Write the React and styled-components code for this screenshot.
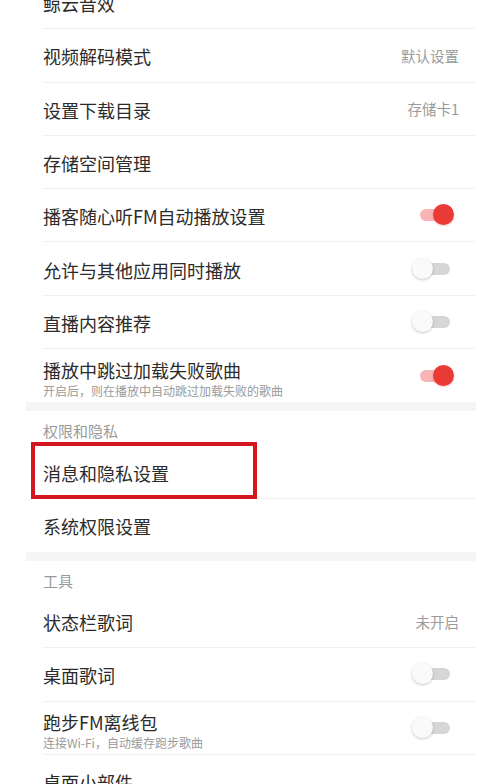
import styled, { createGlobalStyle } from "styled-components";

const GlobalStyle = createGlobalStyle`
  html, body {
    margin: 0;
    padding: 0;
    background: #ffffff;
    overflow: hidden;
  }
  body {
    font-family: "Noto Sans CJK SC", "Noto Sans", sans-serif;
  }
`;

const Page = styled.div`
  width: 493px;
  height: 784px;
  overflow: hidden;
  background: #ffffff;
`;

const List = styled.div`
  margin: -24px 17px 0 26px;
  display: flex;
  flex-direction: column;
`;

const Row = styled.div`
  position: relative;
  height: 53.3px;
  flex-shrink: 0;
  box-sizing: border-box;
  margin-left: 17px;
  padding-right: 17px;
  display: flex;
  align-items: center;
  justify-content: space-between;
  border-bottom: ${({ last }) => (last ? "none" : "1px solid #f1f1f1")};
`;

const TextStack = styled.div`
  display: flex;
  flex-direction: column;
  padding-top: ${({ sub }) => (sub ? "6px" : "2px")};
`;

const Title = styled.span`
  font-size: 18px;
  line-height: 22px;
  color: #2b2b2b;
`;

const Sub = styled.span`
  font-size: 12px;
  line-height: 16px;
  margin-top: 2px;
  color: #9a9a9a;
`;

const Value = styled.span`
  font-size: 14.5px;
  color: #9b9b9b;
`;

const Band = styled.div`
  height: 9px;
  flex-shrink: 0;
  background: #f5f5f5;
`;

const Header = styled.div`
  height: 34px;
  flex-shrink: 0;
  box-sizing: border-box;
  padding: 10px 0 0 17px;
  font-size: 15px;
  line-height: 20px;
  color: #9a9a9a;
`;

const Toggle = styled.div`
  position: relative;
  width: 30px;
  height: 22px;
  margin-right: 9px;
  flex-shrink: 0;
`;

const Track = styled.div`
  position: absolute;
  left: 0;
  right: 0;
  top: 5px;
  height: 12px;
  border-radius: 6px;
  background: ${({ on }) => (on ? "#f8b4b4" : "#d6d6d6")};
`;

const Knob = styled.div`
  position: absolute;
  top: 0;
  left: ${({ on }) => (on ? "13px" : "-8px")};
  width: 21px;
  height: 21px;
  border-radius: 50%;
  background: ${({ on }) => (on ? "#ea3a35" : "#fafafa")};
  box-shadow: ${({ on }) =>
    on ? "0 1px 2px rgba(200, 30, 30, 0.25)" : "0 1px 3px rgba(0, 0, 0, 0.22)"};
`;

const Highlight = styled.div`
  position: absolute;
  left: -12px;
  top: -3px;
  width: 226px;
  height: 57px;
  box-sizing: border-box;
  border: 4.5px solid #d3151f;
  pointer-events: none;
`;

const Switch = ({ on }) => (
  <Toggle>
    <Track on={on} />
    <Knob on={on} />
  </Toggle>
);

const Item = ({ title, sub, value, toggle, last, highlight }) => (
  <Row last={last}>
    <TextStack sub={!!sub}>
      <Title>{title}</Title>
      {sub && <Sub>{sub}</Sub>}
    </TextStack>
    {value && <Value>{value}</Value>}
    {toggle !== undefined && <Switch on={toggle} />}
    {highlight && <Highlight />}
  </Row>
);

export default function App() {
  return (
    <Page>
      <GlobalStyle />
      <List>
        <Item title="鲸云音效" />
        <Item title="视频解码模式" value="默认设置" />
        <Item title="设置下载目录" value="存储卡1" />
        <Item title="存储空间管理" />
        <Item title="播客随心听FM自动播放设置" toggle={true} />
        <Item title="允许与其他应用同时播放" toggle={false} />
        <Item title="直播内容推荐" toggle={false} />
        <Item
          title="播放中跳过加载失败歌曲"
          sub="开启后，则在播放中自动跳过加载失败的歌曲"
          toggle={true}
          last
        />
        <Band />
        <Header>权限和隐私</Header>
        <Item title="消息和隐私设置" highlight />
        <Item title="系统权限设置" last />
        <Band />
        <Header>工具</Header>
        <Item title="状态栏歌词" value="未开启" />
        <Item title="桌面歌词" toggle={false} />
        <Item
          title="跑步FM离线包"
          sub="连接Wi-Fi，自动缓存跑步歌曲"
          toggle={false}
        />
        <Item title="桌面小部件" />
      </List>
    </Page>
  );
}
